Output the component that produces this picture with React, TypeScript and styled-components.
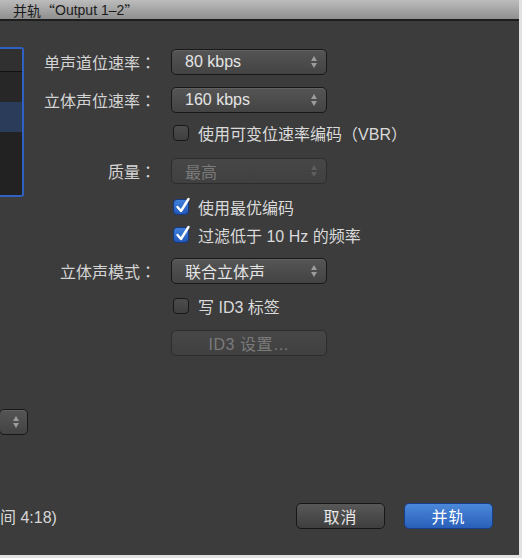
import React from "react";
import styled, { createGlobalStyle } from "styled-components";

const GlobalStyle = createGlobalStyle`
  html, body {
    margin: 0;
    padding: 0;
    background: #e2e2e2;
  }
  body {
    font-family: "Liberation Sans", "Noto Sans CJK SC", sans-serif;
  }
`;

const Window = styled.div`
  width: 519px;
  height: 555px;
  display: flex;
  flex-direction: column;
  background: #3c3c3c;
  overflow: hidden;
`;

const TitleBar = styled.div`
  height: 19px;
  flex-shrink: 0;
  display: flex;
  align-items: center;
  padding-left: 13px;
  background: linear-gradient(#bcbcbc, #8f8f8f);
  border-bottom: 2px solid #1e1e1e;
  color: #1b1b1b;
  font-size: 14px;
  white-space: pre;
`;

// full-width CJK punctuation (quotes, colon) centred in its cell
const Wide = styled.span`
  font-family: "Noto Sans CJK TC", "Noto Sans CJK SC", sans-serif;
`;

const Main = styled.div`
  flex: 1;
  display: flex;
`;

const LeftColumn = styled.div`
  width: 30px;
  flex-shrink: 0;
  display: flex;
  flex-direction: column;
`;

const ListPanel = styled.div`
  margin-top: 26px;
  width: 24px;
  height: 150px;
  box-sizing: border-box;
  border: 2px solid #2e61c2;
  border-left: none;
  border-radius: 0 3px 3px 0;
  display: flex;
  flex-direction: column;
  background: #232323;
  overflow: hidden;
`;

const ListRow = styled.div<{ $h: number; $bg: string; $line?: boolean }>`
  height: ${(p) => p.$h}px;
  flex-shrink: 0;
  background: ${(p) => p.$bg};
  border-bottom: ${(p) => (p.$line ? "1px solid #111" : "none")};
`;

const Form = styled.div`
  display: flex;
  flex-direction: column;
`;

const Row = styled.div<{ $mt: number; $h: number }>`
  display: grid;
  grid-template-columns: 126px 156px;
  column-gap: 15px;
  align-items: center;
  margin-top: ${(p) => p.$mt}px;
  height: ${(p) => p.$h}px;
`;

const Label = styled.div`
  grid-column: 1;
  text-align: right;
  color: #d4d4d4;
  font-size: 16px;
  white-space: nowrap;
`;

const Popup = styled.div<{ $disabled?: boolean; $width?: number }>`
  grid-column: 2;
  width: ${(p) => p.$width ?? 156}px;
  height: 26px;
  box-sizing: border-box;
  display: flex;
  align-items: center;
  justify-content: space-between;
  padding: 0 9px 0 13px;
  border-radius: 5px;
  border: 1px solid ${(p) => (p.$disabled ? "#2c2c2c" : "#181818")};
  background: ${(p) =>
    p.$disabled
      ? "linear-gradient(#474747, #404040)"
      : "linear-gradient(#555555, #434343)"};
  box-shadow: ${(p) =>
    p.$disabled ? "none" : "inset 0 1px 0 rgba(255,255,255,0.08)"};
  color: ${(p) => (p.$disabled ? "#7a7a7a" : "#e4e4e4")};
  font-size: 16px;
  white-space: nowrap;
`;

const Stepper = styled.div<{ $disabled?: boolean }>`
  display: flex;
  flex-direction: column;
  gap: 2px;
  &::before,
  &::after {
    content: "";
    display: block;
    border-left: 3px solid transparent;
    border-right: 3px solid transparent;
  }
  &::before {
    border-bottom: 5px solid ${(p) => (p.$disabled ? "#5e5e5e" : "#9c9c9c")};
  }
  &::after {
    border-top: 5px solid ${(p) => (p.$disabled ? "#5e5e5e" : "#9c9c9c")};
  }
`;

const CheckLine = styled.label`
  grid-column: 2;
  display: flex;
  align-items: center;
  gap: 9px;
  padding-left: 2px;
  color: #dadada;
  font-size: 16px;
  white-space: nowrap;
`;

const Box = styled.span<{ $on?: boolean }>`
  position: relative;
  width: 16px;
  height: 16px;
  box-sizing: border-box;
  flex-shrink: 0;
  border-radius: 4px;
  border: 1px solid ${(p) => (p.$on ? "#163a80" : "#181818")};
  background: ${(p) =>
    p.$on
      ? "linear-gradient(#3f80dc, #2257b6)"
      : "linear-gradient(#4d4d4d, #3f3f3f)"};
  svg {
    position: absolute;
    left: 1px;
    top: -3px;
  }
`;

const PushButton = styled.div<{ $primary?: boolean; $disabled?: boolean; $width: number }>`
  grid-column: 2;
  width: ${(p) => p.$width}px;
  height: 26px;
  box-sizing: border-box;
  display: flex;
  align-items: center;
  justify-content: center;
  border-radius: 5px;
  font-size: 16px;
  border: 1px solid
    ${(p) => (p.$primary ? "#173f8a" : p.$disabled ? "#2c2c2c" : "#171717")};
  background: ${(p) =>
    p.$primary
      ? "linear-gradient(#4b88da, #2a5fb9)"
      : p.$disabled
      ? "linear-gradient(#474747, #404040)"
      : "linear-gradient(#585858, #3e3e3e)"};
  color: ${(p) => (p.$primary ? "#ffffff" : p.$disabled ? "#7a7a7a" : "#e8e8e8")};
  letter-spacing: ${(p) => (p.$disabled ? "0.5px" : "1px")};
`;

const Footer = styled.div`
  height: 52px;
  flex-shrink: 0;
  box-sizing: border-box;
  display: flex;
  align-items: center;
  gap: 19px;
  padding: 0 26px 26px 0;
`;

const Duration = styled.div`
  flex: 1;
  color: #d6d6d6;
  font-size: 16px;
  white-space: nowrap;
`;

const Check = () => (
  <svg width="16" height="17" viewBox="0 0 16 17">
    <path
      d="M2.5 10 L6 14 L13.5 2"
      fill="none"
      stroke="#ffffff"
      strokeWidth="2.4"
      strokeLinecap="round"
      strokeLinejoin="round"
    />
  </svg>
);

const CheckItem = ({ on, text }: { on?: boolean; text: React.ReactNode }) => (
  <CheckLine>
    <Box $on={on}>{on && <Check />}</Box>
    {text}
  </CheckLine>
);

const FieldLabel = ({ text }: { text: string }) => (
  <Label>
    {text}
    <Wide>：</Wide>
  </Label>
);

export default function App() {
  return (
    <>
      <GlobalStyle />
      <Window>
        <TitleBar>
          并轨<Wide>“</Wide>Output 1–2<Wide>”</Wide>
        </TitleBar>
        <Main>
          <LeftColumn>
            <ListPanel>
              <ListRow $h={22} $bg="#303030" $line />
              <ListRow $h={30} $bg="#272727" />
              <ListRow $h={30} $bg="#2b3c5b" />
              <ListRow $h={64} $bg="#222222" />
            </ListPanel>
            <Popup $width={29} style={{ marginTop: 212, marginLeft: -1 }}>
              <span />
              <Stepper />
            </Popup>
          </LeftColumn>
          <Form>
            <Row $mt={28} $h={26}>
              <FieldLabel text="单声道位速率" />
              <Popup>
                80 kbps
                <Stepper />
              </Popup>
            </Row>
            <Row $mt={12} $h={26}>
              <FieldLabel text="立体声位速率" />
              <Popup>
                160 kbps
                <Stepper />
              </Popup>
            </Row>
            <Row $mt={8} $h={22}>
              <CheckItem
                text={
                  <span>
                    使用可变位速率编码<Wide>（</Wide>VBR<Wide>）</Wide>
                  </span>
                }
              />
            </Row>
            <Row $mt={15} $h={26}>
              <FieldLabel text="质量" />
              <Popup $disabled>
                最高
                <Stepper $disabled />
              </Popup>
            </Row>
            <Row $mt={11} $h={22}>
              <CheckItem on text="使用最优编码" />
            </Row>
            <Row $mt={6} $h={22}>
              <CheckItem on text="过滤低于 10 Hz 的频率" />
            </Row>
            <Row $mt={13} $h={26}>
              <FieldLabel text="立体声模式" />
              <Popup>
                联合立体声
                <Stepper />
              </Popup>
            </Row>
            <Row $mt={10} $h={22}>
              <CheckItem text="写 ID3 标签" />
            </Row>
            <Row $mt={14} $h={26}>
              <PushButton $disabled $width={156}>
                ID3 设置…
              </PushButton>
            </Row>
          </Form>
        </Main>
        <Footer>
          <Duration>间 4:18)</Duration>
          <PushButton $width={89}>取消</PushButton>
          <PushButton $primary $width={89}>
            并轨
          </PushButton>
        </Footer>
      </Window>
    </>
  );
}
